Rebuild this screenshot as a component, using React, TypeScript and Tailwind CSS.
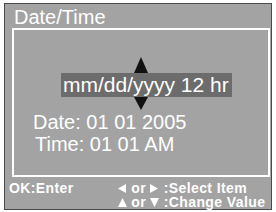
const FONT = { fontFamily: '"Liberation Sans", Arial, sans-serif' };

function Arrow({ up }: { up?: boolean }) {
  return (
    <svg width="14" height={up ? 16 : 13} viewBox={up ? "0 0 14 16" : "0 0 14 13"} className="block">
      <path d={up ? "M7 0L14 16H0Z" : "M0 0H14L7 13Z"} fill="#111" />
    </svg>
  );
}

function Mini({ dir }: { dir: "l" | "r" | "u" | "d" }) {
  const d = {
    l: "M0 4.5L8 0V9Z",
    r: "M8 4.5L0 0V9Z",
    u: "M4.5 0L9 9H0Z",
    d: "M0 0H9L4.5 9Z",
  }[dir];
  return (
    <svg width="9" height="9" viewBox="0 0 9 9" className="inline-block align-[0px]">
      <path d={d} fill="#fff" />
    </svg>
  );
}

export default function App() {
  return (
    <div className="w-[276px] h-[212px] bg-white pt-[3px] pl-[4px] pr-[4px] pb-[2px]" style={FONT}>
      <div className="h-full border border-[#4a4a4a] bg-[#a3a3a3] flex flex-col">
        <div className="pl-[9px] pt-[2px] text-[20px] leading-[22px] text-white">Date/Time</div>

        <div className="ml-[7px] mr-[1px] h-[149px] border-2 border-white flex flex-col">
          <div className="ml-[120px] mt-[27px]">
            <Arrow up />
          </div>
          <div className="ml-[47px] w-[171px] h-[24px] bg-[#6c6c6c] text-white text-[21px] leading-[24px] pl-[2px] whitespace-nowrap">
            mm/dd/yyyy 12 hr
          </div>
          <div className="ml-[120px]">
            <Arrow />
          </div>
          <div className="ml-[19px] mt-[1px] text-white text-[20px] leading-[22px] whitespace-nowrap">
            Date: 01 01 2005
          </div>
          <div className="ml-[21px] text-white text-[20px] leading-[22px] whitespace-nowrap">
            Time: 01 01 AM
          </div>
        </div>

        <div className="mt-[4px] flex text-white font-bold text-[14px] leading-[14px] tracking-[0.4px] whitespace-nowrap">
          <div className="pl-[4px] w-[113px]">OK:Enter</div>
          <div className="flex flex-col">
            <span>
              <Mini dir="l" /> or <Mini dir="r" /> :Select Item
            </span>
            <span>
              <Mini dir="u" /> or <Mini dir="d" /> :Change Value
            </span>
          </div>
        </div>
      </div>
    </div>
  );
}
